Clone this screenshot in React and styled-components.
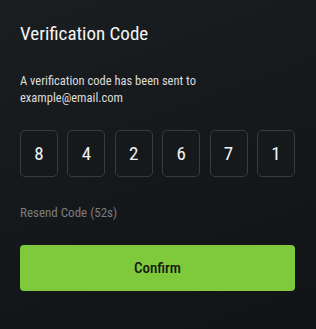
import React from "react";
import styled, { createGlobalStyle } from "styled-components";

const GlobalStyle = createGlobalStyle`
  html, body {
    margin: 0;
    padding: 0;
    background: #15181b;
  }
  * {
    box-sizing: border-box;
  }
`

const Screen = styled.div`
  width: 316px;
  height: 329px;
  padding: 21px 21px 0 20px;
  background: linear-gradient(160deg, #1b1e21 0%, #15181b 55%, #111417 100%);
  font-family: "Roboto Condensed", Roboto, "Liberation Sans", sans-serif;
  color: #ffffff;
  display: flex;
  flex-direction: column;
`

const Title = styled.h1`
  margin: 0;
  font-size: 19px;
  font-weight: 400;
  line-height: 26px;
  color: #f4f4f4;
`

const Description = styled.p`
  margin: 25px 0 0;
  font-size: 12.5px;
  line-height: 17px;
  color: #dcdcdc;
`

const CodeRow = styled.div`
  margin-top: 24px;
  display: flex;
  justify-content: space-between;
`

const CodeBox = styled.div`
  width: 38px;
  height: 47px;
  border: 1px solid #383b3e;
  border-radius: 5px;
  background: #16191c;
  display: flex;
  align-items: center;
  justify-content: center;
  font-size: 19px;
  color: #f2f2f2;
`

const Resend = styled.div`
  margin-top: 27px;
  font-size: 13px;
  line-height: 17px;
  color: #7a7c7e;
`

const ConfirmButton = styled.button`
  margin-top: 24px;
  width: 100%;
  height: 46px;
  border: none;
  border-radius: 4px;
  background: #7fc93d;
  color: #14190e;
  font-family: "Roboto Condensed", Roboto, "Liberation Sans", sans-serif;
  font-size: 15px;
  font-weight: 500;
  cursor: pointer;
`

const code = ["8", "4", "2", "6", "7", "1"];

export default function App() {
  return (
    <>
      <GlobalStyle />
      <Screen>
        <Title>Verification Code</Title>
        <Description>
          A verification code has been sent to
          <br />
          example@email.com
        </Description>
        <CodeRow>
          {code.map((d, i) => (
            <CodeBox key={i}>{d}</CodeBox>
          ))}
        </CodeRow>
        <Resend>Resend Code (52s)</Resend>
        <ConfirmButton>Confirm</ConfirmButton>
      </Screen>
    </>
  );
}
